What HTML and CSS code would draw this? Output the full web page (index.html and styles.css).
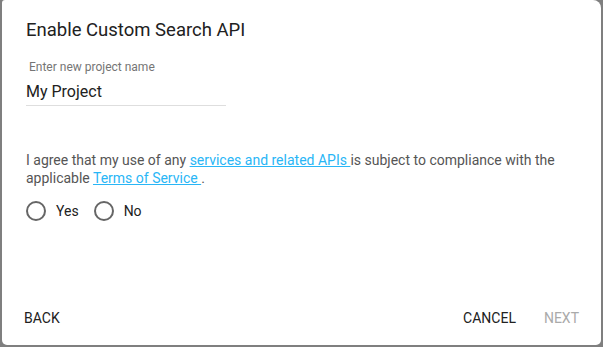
FILE: index.html
```html
<!DOCTYPE html>
<html lang="en">
<head>
    <meta charset="UTF-8">
    <meta name="viewport" content="width=device-width, initial-scale=1.0">
    <title>Enable Custom Search API</title>
    <link rel="stylesheet" href="styles.css">
</head>
<body>
    <div class="dialog">
        <h2 class="dialog-title">Enable Custom Search API</h2>

        <div class="field">
            <label class="field-label" for="project-name">Enter new project name</label>
            <input type="text" class="field-input" id="project-name" value="My Project" />
        </div>

        <p class="terms">
            I agree that my use of any <a href="#">services and related APIs </a>is subject to compliance with the
            applicable <a href="#">Terms of Service </a>.
        </p>

        <div class="choices">
            <label class="choice"><input type="radio" name="agree" value="yes" /> Yes</label>
            <label class="choice"><input type="radio" name="agree" value="no" /> No</label>
        </div>

        <div class="dialog-actions">
            <button class="btn">BACK</button>
            <span class="spacer"></span>
            <button class="btn">CANCEL</button>
            <button class="btn btn-disabled" disabled>NEXT</button>
        </div>
    </div>
</body>
</html>
```

FILE: styles.css
```css
body {
    font-family: Roboto, 'Liberation Sans', sans-serif;
    background-color: #7f7f7f;
    margin: 0;
    height: 347px;
    overflow: hidden;
}

.dialog {
    display: flex;
    flex-direction: column;
    box-sizing: border-box;
    height: 345px;
    margin: 0 2px;
    padding: 18px 24px 9px;
    background-color: #fff;
    border-radius: 0 0 5px 5px;
    border-top-right-radius: 8px;
    border-top-left-radius: 3px;
}

.dialog-title {
    margin: 0;
    font-size: 18.5px;
    font-weight: 400;
    line-height: 24px;
    color: #212121;
}

.field {
    display: flex;
    flex-direction: column;
    width: 200px;
    margin-top: 18px;
}

.field-label {
    font-size: 12px;
    line-height: 14px;
    color: #757575;
    padding-left: 3px;
}

.field-input {
    margin-top: 7px;
    padding: 0 0 4px;
    border: none;
    border-bottom: 1px solid #dedede;
    font-family: inherit;
    font-size: 16px;
    line-height: 20px;
    height: 25px;
    box-sizing: border-box;
    color: #212121;
    background: transparent;
    outline: none;
}

.terms {
    margin: 45px 0 0;
    font-size: 14px;
    line-height: 18px;
    color: #555;
}

.terms a {
    color: #29b6f6;
    text-decoration: underline;
}

.choices {
    display: flex;
    gap: 15px;
    margin-top: 14px;
}

.choice {
    display: flex;
    align-items: center;
    gap: 10px;
    font-size: 14px;
    color: #212121;
}

.choice input {
    appearance: none;
    margin: 0;
    width: 20px;
    height: 20px;
    border: 2px solid #666;
    border-radius: 50%;
    box-sizing: border-box;
}

.dialog-actions {
    display: flex;
    align-items: center;
    margin: auto -16px 0 -16px;
}

.spacer {
    flex: 1;
}

.btn {
    height: 36px;
    padding: 0 14px;
    border: none;
    background: transparent;
    font-family: inherit;
    font-size: 14px;
    font-weight: 400;
    color: #212121;
}

.btn-disabled {
    color: #aaa;
}
```
